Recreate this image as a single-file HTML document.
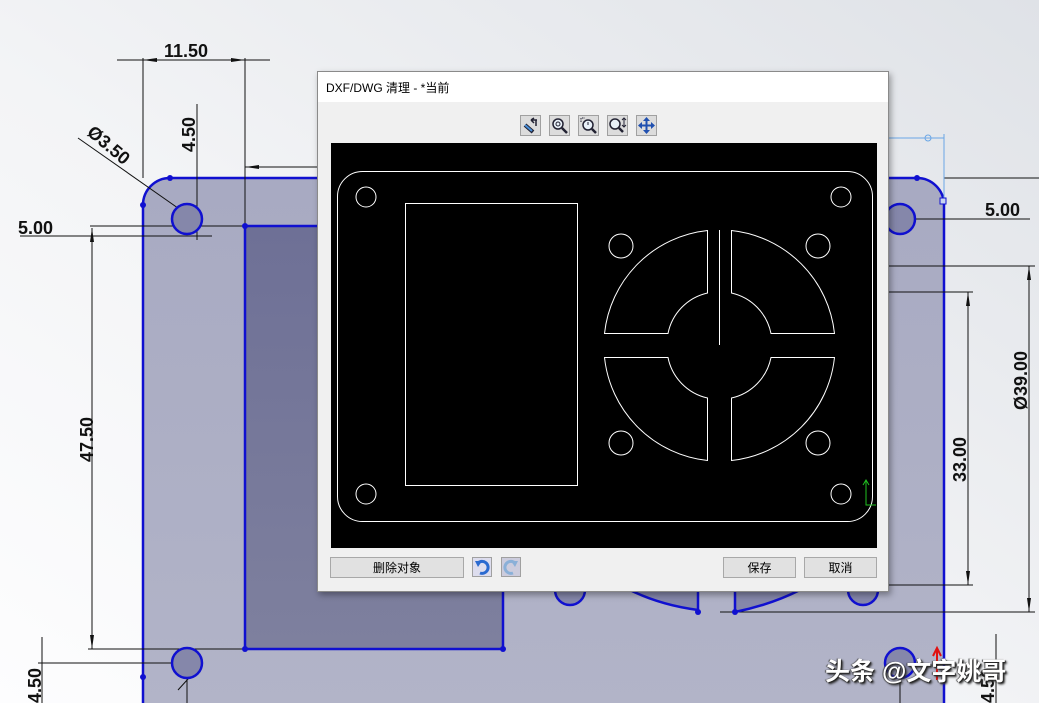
<!DOCTYPE html>
<html><head><meta charset="utf-8"><style>
html,body{margin:0;padding:0;width:1039px;height:703px;overflow:hidden;font-family:"Liberation Sans","Noto Sans CJK SC",sans-serif}
#bg{position:absolute;left:0;top:0}
.dlg{position:absolute;left:317px;top:71px;width:570px;height:519px;background:#f0f0f0;border:1px solid #8a8a8a;box-shadow:2px 3px 6px rgba(0,0,0,.35)}
.title{height:30px;background:#fff;font-size:12px;line-height:32px;padding-left:8px;color:#000}
.tb{position:absolute;top:43px;width:21px;height:21px;border:1px solid #a0a0a0;background:#dcdcdc;box-sizing:border-box}
.btn{position:absolute;top:485px;height:21px;border:1px solid #a8a8a8;background:#e1e1e1;box-sizing:border-box;font-size:12px;text-align:center;line-height:20px}
.wm{position:absolute;left:825px;top:652px;font-size:25px;font-weight:bold;color:#fff;text-shadow:1px 1px 1px #222,-1px 0 1px #444,2px 2px 2px #333;white-space:nowrap;font-family:"Liberation Sans","Noto Sans CJK SC",sans-serif}
</style></head><body>
<svg id="bg" width="1039" height="703" viewBox="0 0 1039 703">
<defs>
<linearGradient id="g0" x1="1" y1="0" x2="0" y2="1"><stop offset="0" stop-color="#dfe2e7"/><stop offset=".55" stop-color="#f3f4f6"/><stop offset="1" stop-color="#fdfdfe"/></linearGradient>
<linearGradient id="g1" x1="0" y1="0" x2="0" y2="1"><stop offset="0" stop-color="#a8aac2"/><stop offset="1" stop-color="#b2b4c8"/></linearGradient>
<linearGradient id="g2" x1="0" y1="0" x2="0" y2="1"><stop offset="0" stop-color="#6e7096"/><stop offset="1" stop-color="#7e809e"/></linearGradient>
</defs>
<rect width="1039" height="703" fill="url(#g0)"/>
<path d="M143,720 L143,205 A27,27 0 0 1 170,178 L917,178 A27,27 0 0 1 944,205 L944,720 Z" fill="url(#g1)" stroke="#1010d0" stroke-width="2.5"/>
<rect x="245" y="226" width="258" height="423" fill="url(#g2)" stroke="#1010d0" stroke-width="2.5"/>
<g stroke="#111" stroke-width="1" fill="none">
<line x1="117" y1="60" x2="270" y2="60"/><line x1="143" y1="58" x2="143" y2="178"/><line x1="245" y1="58" x2="245" y2="226"/>
<line x1="245" y1="167" x2="317" y2="167"/>
<line x1="197" y1="104" x2="197" y2="240"/>
<line x1="78" y1="138" x2="195" y2="220"/>
<line x1="90" y1="226" x2="245" y2="226"/><line x1="20" y1="236" x2="212" y2="236"/>
<line x1="92" y1="228" x2="92" y2="649"/><line x1="88" y1="649" x2="245" y2="649"/>
<line x1="42" y1="637" x2="42" y2="703"/><line x1="38" y1="663" x2="190" y2="663"/>
<line x1="178" y1="690" x2="198" y2="668"/><line x1="187" y1="663" x2="187" y2="703"/>
<line x1="944" y1="178" x2="1039" y2="178"/><line x1="890" y1="219" x2="1030" y2="219"/>
<line x1="888" y1="266" x2="1035" y2="266"/><line x1="888" y1="292" x2="973" y2="292"/>
<line x1="1029" y1="266" x2="1029" y2="612"/><line x1="968" y1="292" x2="968" y2="585"/>
<line x1="888" y1="585" x2="973" y2="585"/><line x1="720" y1="612" x2="1035" y2="612"/>
<line x1="996" y1="634" x2="996" y2="703"/><line x1="900" y1="680" x2="900" y2="703"/>
</g>
<g fill="#111">
<path d="M143,60 l14,-2 v4z M245,60 l-14,-2 v4z M245,167 l14,-2 v4z M197,226 l-2,-14 h4z M92,228 l-2,14 h4z M92,649 l-2,-14 h4z M1029,266 l-2,14 h4z M1029,612 l-2,-14 h4z M968,292 l-2,14 h4z M968,585 l-2,-14 h4z"/>
</g>
<g font-family="Liberation Sans,sans-serif" font-size="18" font-weight="bold" fill="#111">
<text x="164" y="57">11.50</text>
<text x="18" y="234">5.00</text>
<text x="985" y="216">5.00</text>
<text transform="translate(195,152) rotate(-90)">4.50</text>
<text transform="translate(93,462) rotate(-90)">47.50</text>
<text transform="translate(966,482) rotate(-90)">33.00</text>
<text transform="translate(1027,410) rotate(-90)">Ø39.00</text>
<text transform="translate(41,703) rotate(-90)">4.50</text>
<text transform="translate(994,703) rotate(-90)">4.50</text>
<text transform="translate(86,134) rotate(40)">Ø3.50</text>
</g>
<g fill="#8587aa" stroke="#1010d0" stroke-width="2.5">
<circle cx="187" cy="219" r="15"/><circle cx="187" cy="663" r="15"/><circle cx="900" cy="219" r="15"/><circle cx="900" cy="663" r="15"/>
<path d="M555,590 a15,15 0 0 0 30,0"/><path d="M848,590 a15,15 0 0 0 30,0"/>
<path d="M630,590 Q660,605 698,610 L698,590"/><path d="M735,590 L735,612 Q770,605 800,590"/>
</g>
<g fill="#1010d0"><circle cx="143" cy="205" r="3"/><circle cx="170" cy="178" r="3"/><circle cx="245" cy="226" r="3"/><circle cx="503" cy="649" r="3"/><circle cx="245" cy="649" r="3"/><circle cx="917" cy="178" r="3"/><circle cx="698" cy="612" r="3"/><circle cx="735" cy="612" r="3"/><circle cx="143" cy="677" r="3"/></g>
<g stroke="#6aa6e6" fill="none"><line x1="888" y1="138" x2="944" y2="138"/><line x1="944" y1="134" x2="944" y2="200"/><circle cx="928" cy="138" r="3"/></g>
<rect x="940" y="198" width="6" height="6" fill="#c8d4f0" stroke="#1010d0"/>
<path d="M937,650 v30 M933,656 l4,-8 4,8" stroke="#e01010" stroke-width="2" fill="none"/>
</svg>
<div class="dlg">
<div class="title">DXF/DWG 清理 - *当前</div>
<div class="tb" style="left:202px"><svg width="19" height="19"><path d="M4,9 L12,16" stroke="#223" stroke-width="4"/><path d="M4,9 L11,15" stroke="#4a90d9" stroke-width="2"/><path d="M10,4 L16,4 M10,4 L13,2 M10,4 L13,7 M15,4 v6" stroke="#223" stroke-width="1.5" fill="none"/></svg></div>
<div class="tb" style="left:231px"><svg width="19" height="19"><circle cx="8" cy="8" r="5" fill="#e8f0f8" stroke="#223" stroke-width="1.5"/><circle cx="8" cy="8" r="2" fill="none" stroke="#223"/><path d="M12,12 L17,17" stroke="#223" stroke-width="2.5"/></svg></div>
<div class="tb" style="left:260px"><svg width="19" height="19"><path d="M2,6 V2 H6" stroke="#223" stroke-dasharray="1.5 1" fill="none"/><circle cx="9" cy="9" r="5" fill="#e8f0f8" stroke="#223" stroke-width="1.5"/><path d="M9,6 v3" stroke="#223"/><path d="M13,13 L17,17" stroke="#223" stroke-width="2.5"/></svg></div>
<div class="tb" style="left:289px"><svg width="19" height="19"><circle cx="7" cy="8" r="5" fill="#e8f0f8" stroke="#223" stroke-width="1.5"/><path d="M11,12 L15,16" stroke="#223" stroke-width="2.5"/><path d="M16,2 v9 M14,4 l2,-2 2,2 M14,9 l2,2 2,-2" stroke="#223" fill="none"/></svg></div>
<div class="tb" style="left:318px"><svg width="19" height="19"><path d="M9.5,2 V17 M2,9.5 H17" stroke="#2050b0" stroke-width="2"/><path d="M6,5 l3.5,-4 3.5,4z M6,14 l3.5,4 3.5,-4z M5,6 l-4,3.5 4,3.5z M14,6 l4,3.5 -4,3.5z" fill="#2050b0"/></svg></div>
<svg style="position:absolute;left:13px;top:71px" width="546" height="405" viewBox="331 143 546 405">
<rect x="331" y="143" width="546" height="405" fill="#000"/>
<g stroke="#fff" stroke-width="1" fill="none">
<rect x="337.5" y="171.5" width="535" height="350" rx="25"/>
<rect x="405.5" y="203.5" width="172" height="282"/>
<circle cx="366" cy="197" r="10"/><circle cx="841" cy="197" r="10"/><circle cx="366" cy="494" r="10"/><circle cx="841" cy="494" r="10"/>
<circle cx="621" cy="246" r="12"/><circle cx="818" cy="246" r="12"/><circle cx="621" cy="443" r="12"/><circle cx="818" cy="443" r="12"/>
<path d="M604.5,333.5 A116,116 0 0 1 707.5,230.5 L707.5,293 A52,52 0 0 0 668,333.5 Z"/>
<path d="M834.5,333.5 A116,116 0 0 0 731.5,230.5 L731.5,293 A52,52 0 0 1 771,333.5 Z"/>
<path d="M604.5,357.5 A116,116 0 0 0 707.5,460.5 L707.5,398 A52,52 0 0 1 668,357.5 Z"/>
<path d="M834.5,357.5 A116,116 0 0 1 731.5,460.5 L731.5,398 A52,52 0 0 0 771,357.5 Z"/>
<line x1="719.5" y1="230" x2="719.5" y2="345"/>
</g>
<path d="M866,480 V505 H876 M863,485 l3,-5 3,5" stroke="#20c020" fill="none"/>
</svg>
<div class="btn" style="left:12px;width:134px">删除对象</div>
<div class="tb" style="left:154px;top:485px;width:20px;height:20px;background:#dde"><svg width="18" height="18"><path d="M5,5 A6,6 0 1 1 7,15" stroke="#2a6ad0" stroke-width="3" fill="none"/><path d="M2,3 L9,3 L5,9z" fill="#2a6ad0"/></svg></div>
<div class="tb" style="left:183px;top:485px;width:20px;height:20px;background:#ccd"><svg width="18" height="18"><path d="M13,5 A6,6 0 1 0 11,15" stroke="#8ab0d8" stroke-width="3" fill="none"/><path d="M16,3 L9,3 L13,9z" fill="#8ab0d8"/></svg></div>
<div class="btn" style="left:405px;width:73px">保存</div>
<div class="btn" style="left:486px;width:73px">取消</div>
</div>
<div class="wm">头条 @文字姚哥</div>
</body></html>
